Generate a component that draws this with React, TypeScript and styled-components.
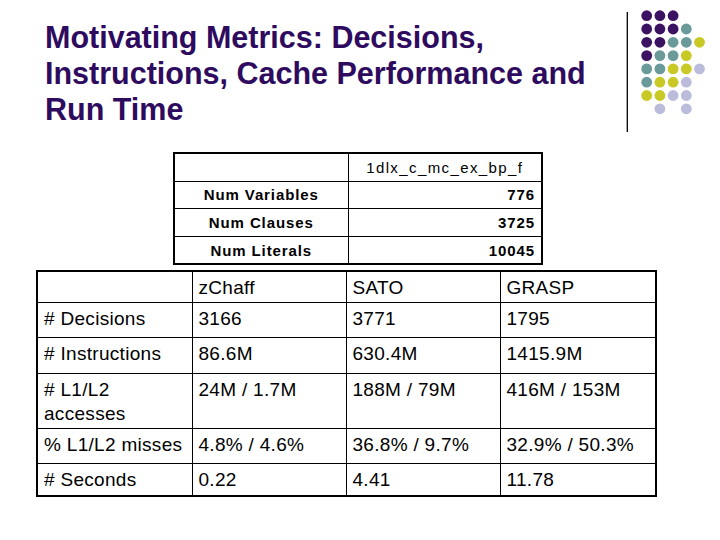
import React from "react";
import styled, { createGlobalStyle } from "styled-components";

const Global = createGlobalStyle`
  html, body { margin: 0; padding: 0; background: #ffffff; }
  body { font-family: "Liberation Sans", Arial, sans-serif; }
`;

const Page = styled.div`
  width: 720px;
  height: 540px;
  background: #ffffff;
  overflow: hidden;
  display: flex;
  flex-direction: column;
`;

const Header = styled.header`
  display: flex;
  align-items: flex-start;
  height: 152px;
  flex-shrink: 0;
`;

const Title = styled.h1`
  margin: 19px 0 0 45px;
  width: 570px;
  font-family: "Liberation Sans", Arial, sans-serif;
  font-weight: bold;
  font-size: 30.5px;
  line-height: 36px;
  color: #2e0b5e;
`;

const Logo = styled.div`
  margin-left: auto;
  width: 100px;
  height: 140px;
`;

const Col = styled.col<{ $w: number }>`
  width: ${(p) => p.$w}px;
`;

const SmallTable = styled.table`
  margin-left: 173px;
  border-collapse: collapse;
  table-layout: fixed;
  width: 368px;
  border: 2px solid #000;
  font-family: "Liberation Sans", Arial, sans-serif;
  color: #000;
`;

const SmallCell = styled.td<{ $align: "center" | "right"; $head?: boolean }>`
  border: 1px solid #000;
  height: 26.6px;
  padding: 0 6px 0 6px;
  text-align: ${(p) => p.$align};
  vertical-align: middle;
  font-size: 15px;
  font-weight: ${(p) => (p.$head ? "normal" : "bold")};
  letter-spacing: ${(p) => (p.$head ? "1.4px" : "0.9px")};
  white-space: nowrap;
`;

const MainTable = styled.table`
  margin: 5px 0 0 36px;
  border-collapse: collapse;
  table-layout: fixed;
  width: 619px;
  border: 2px solid #000;
  font-family: "Liberation Sans", Arial, sans-serif;
  color: #000;
`;

const Cell = styled.td<{ $h: number }>`
  border: 1px solid #000;
  height: ${(p) => p.$h - 5}px;
  padding: 4px 4px 0 6px;
  vertical-align: top;
  font-size: 19px;
  letter-spacing: 0.3px;
  line-height: 24px;
`;

const PURPLE = "#3b1262";
const TEAL = "#6a9a9a";
const YELLOW = "#c9c926";
const LAV = "#bbbbdc";

const grid: (string | null)[][] = [
  [PURPLE, PURPLE, PURPLE, null, null],
  [PURPLE, PURPLE, PURPLE, TEAL, null],
  [PURPLE, PURPLE, TEAL, TEAL, YELLOW],
  [PURPLE, TEAL, TEAL, YELLOW, null],
  [TEAL, TEAL, YELLOW, YELLOW, LAV],
  [TEAL, YELLOW, YELLOW, LAV, null],
  [YELLOW, YELLOW, LAV, LAV, null],
  [null, LAV, null, LAV, null],
];

function DotsLogo() {
  return (
    <svg width="100" height="140" viewBox="0 0 100 140">
      <line x1="7.3" y1="12" x2="7.3" y2="132" stroke="#000" strokeWidth="1.3" />
      {grid.map((row, r) =>
        row.map((c, i) =>
          c ? (
            <circle
              key={`${r}-${i}`}
              cx={26.7 + 13.2 * i}
              cy={15.7 + 13.3 * r}
              r={5.4}
              fill={c}
            />
          ) : null
        )
      )}
    </svg>
  );
}

const smallRows = [
  ["Num Variables", "776"],
  ["Num Clauses", "3725"],
  ["Num Literals", "10045"],
];

const mainRows: { h: number; cells: React.ReactNode[] }[] = [
  { h: 31, cells: ["", "zChaff", "SATO", "GRASP"] },
  { h: 35, cells: ["# Decisions", "3166", "3771", "1795"] },
  { h: 36, cells: ["# Instructions", "86.6M", "630.4M", "1415.9M"] },
  {
    h: 55,
    cells: [
      <>
        # L1/L2
        <br />
        accesses
      </>,
      "24M / 1.7M",
      "188M / 79M",
      "416M / 153M",
    ],
  },
  { h: 35, cells: ["% L1/L2 misses", "4.8% / 4.6%", "36.8% / 9.7%", "32.9% / 50.3%"] },
  { h: 32, cells: ["# Seconds", "0.22", "4.41", "11.78"] },
];

export default function App() {
  return (
    <>
      <Global />
      <Page>
        <Header>
          <Title>
            Motivating Metrics: Decisions, Instructions, Cache Performance and Run Time
          </Title>
          <Logo>
            <DotsLogo />
          </Logo>
        </Header>
        <SmallTable>
          <colgroup>
            <Col $w={174} />
            <Col $w={194} />
          </colgroup>
          <tbody>
            <tr>
              <SmallCell $align="center" $head></SmallCell>
              <SmallCell $align="center" $head>
                1dlx_c_mc_ex_bp_f
              </SmallCell>
            </tr>
            {smallRows.map(([label, value]) => (
              <tr key={label}>
                <SmallCell $align="center">{label}</SmallCell>
                <SmallCell $align="right">{value}</SmallCell>
              </tr>
            ))}
          </tbody>
        </SmallTable>
        <MainTable>
          <colgroup>
            <Col $w={155} />
            <Col $w={154} />
            <Col $w={154} />
            <Col $w={156} />
          </colgroup>
          <tbody>
            {mainRows.map((row, ri) => (
              <tr key={ri}>
                {row.cells.map((c, ci) => (
                  <Cell key={ci} $h={row.h}>
                    {c}
                  </Cell>
                ))}
              </tr>
            ))}
          </tbody>
        </MainTable>
      </Page>
    </>
  );
}
